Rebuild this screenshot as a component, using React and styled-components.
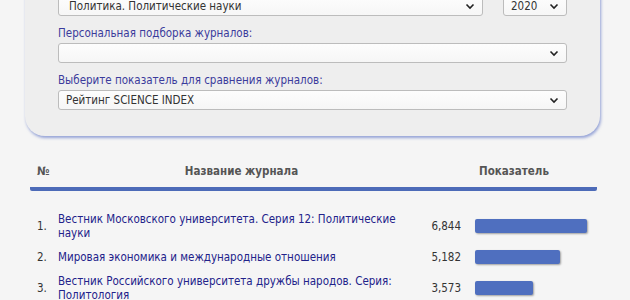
import styled, { createGlobalStyle } from "styled-components";

const GlobalStyle = createGlobalStyle`
  body {
    margin: 0;
    background: #f5f5f5;
    font-family: "DejaVu Sans Condensed", "DejaVu Sans", Verdana, sans-serif;
    font-stretch: condensed;
    font-size: 11.5px;
    overflow: hidden;
  }
`;

const Page = styled.div`
  width: 630px;
  padding-left: 25px;
  box-sizing: border-box;
`;

const Panel = styled.div`
  width: 575px;
  box-sizing: border-box;
  margin-top: -10px;
  padding: 6px 33px 26px;
  background: #eeeeee;
  border-radius: 0 0 20px 20px;
  box-shadow: 1px 2px 3px rgba(70, 95, 190, 0.55);
`;

const Label = styled.div`
  color: #3b3b9c;
  line-height: 14px;
  margin: 10px 0 3px;
`;

const Row = styled.div`
  display: flex;
  gap: 20px;
`;

const SelectBox = styled.div`
  flex: ${(p) => (p.$width ? `0 0 ${p.$width}px` : "1")};
  height: 20px;
  box-sizing: border-box;
  display: flex;
  align-items: center;
  justify-content: space-between;
  padding: 0 7px 0 ${(p) => p.$pad || 7}px;
  background: linear-gradient(#fdfdfd, #f6f6f6);
  border: 1px solid #bcbcbc;
  border-radius: 3px;
  color: #333;
`;

const Chevron = () => (
  <svg width="10" height="7" viewBox="0 0 10 7">
    <path d="M1.5 1.5 L5 5 L8.5 1.5" fill="none" stroke="#222" strokeWidth="1.6" />
  </svg>
);

const Select = ({ value, width, pad }) => (
  <SelectBox $width={width} $pad={pad}>
    <span>{value}</span>
    <Chevron />
  </SelectBox>
);

const Table = styled.div`
  width: 567px;
  margin: 28px 0 0 5px;
`;

const HeaderRow = styled.div`
  display: grid;
  grid-template-columns: 28px 367px 1fr;
  font-weight: bold;
  color: #555;
  line-height: 14px;
  padding-bottom: 9px;
  border-bottom: 4px solid #4d6bb8;
  border-radius: 2px;
`;

const HeadCell = styled.div`
  padding-left: ${(p) => (p.$num ? "7px" : "0")};
  text-align: ${(p) => (p.$num ? "left" : "center")};
  margin-left: ${(p) => (p.$value ? "6px" : "0")};
`;

const Body = styled.div`
  padding-top: 16px;
`;

const DataRow = styled.div`
  display: grid;
  grid-template-columns: 28px 367px 1fr;
  align-items: center;
  padding: 5px 0;
  line-height: 14px;
`;

const Num = styled.div`
  padding-left: 7px;
  color: #333;
`;

const Title = styled.div`
  color: #22228a;
`;

const Value = styled.div`
  display: flex;
  align-items: center;
  gap: 14px;
`;

const Score = styled.span`
  width: 36px;
  text-align: right;
  color: #333;
`;

const Bar = styled.div`
  height: 14px;
  background: #4f6fbf;
  border-radius: 2px;
  box-shadow: 1px 1px 2px rgba(0, 0, 0, 0.35);
`;

const rows = [
  { n: 1, title: "Вестник Московского университета. Серия 12: Политические науки", v: "6,844", x: 6.844 },
  { n: 2, title: "Мировая экономика и международные отношения", v: "5,182", x: 5.182 },
  { n: 3, title: "Вестник Российского университета дружбы народов. Серия: Политология", v: "3,573", x: 3.573 },
];

export default function App() {
  return (
    <Page>
      <GlobalStyle />
      <Panel>
        <Row>
          <Select value="Политика. Политические науки" pad={10} />
          <Select value="2020" width={64} />
        </Row>
        <Label>Персональная подборка журналов:</Label>
        <Select value="" />
        <Label>Выберите показатель для сравнения журналов:</Label>
        <Select value="Рейтинг SCIENCE INDEX" />
      </Panel>
      <Table>
        <HeaderRow>
          <HeadCell $num>№</HeadCell>
          <HeadCell>Название журнала</HeadCell>
          <HeadCell $value>Показатель</HeadCell>
        </HeaderRow>
        <Body>
          {rows.map((r) => (
            <DataRow key={r.n}>
              <Num>{r.n}.</Num>
              <Title>{r.title}</Title>
              <Value>
                <Score>{r.v}</Score>
                <Bar style={{ width: (r.x / 6.844) * 112 }} />
              </Value>
            </DataRow>
          ))}
        </Body>
      </Table>
    </Page>
  );
}
